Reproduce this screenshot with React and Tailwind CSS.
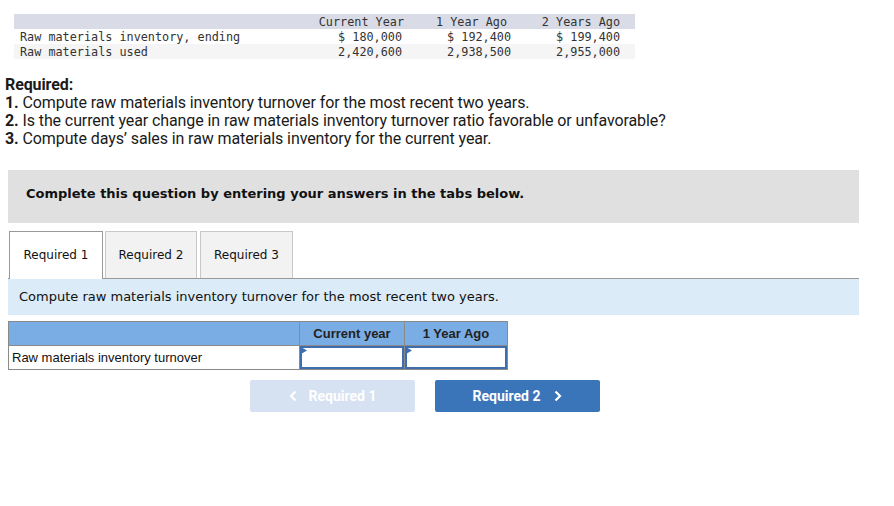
export default function App() {
  const mono = { fontFamily: '"DejaVu Sans Mono", "Liberation Mono", monospace' }
  const verdana = { fontFamily: '"DejaVu Sans", Verdana, sans-serif' }
  const arial = { fontFamily: '"Liberation Sans", Arial, sans-serif' }

  return (
    <div className="w-[894px] h-[506px] bg-white text-[#222] relative">
      {/* data table */}
      <div className="pt-[14px] pl-[14px]">
        <table className="w-[621px] text-[11.8px] leading-[14px] text-[#333] border-collapse" style={mono}>
          <thead>
            <tr className="bg-[#d9dce6] h-[15px]">
              <th className="w-[290px]" />
              <th className="font-normal text-right pr-[2px] w-[102px] pt-px">Current Year</th>
              <th className="font-normal text-right pr-[6px] w-[107px] pt-px">1 Year Ago</th>
              <th className="font-normal text-right pr-[15px] pt-px">2 Years Ago</th>
            </tr>
          </thead>
          <tbody>
            <tr className="h-[15px]">
              <td className="pl-[6px] text-left pt-px">Raw materials inventory, ending</td>
              <td className="text-right pr-[4px] pt-px">$ 180,000</td>
              <td className="text-right pr-[2px] pt-px">$ 192,400</td>
              <td className="text-right pr-[15px] pt-px">$ 199,400</td>
            </tr>
            <tr className="h-[15px] bg-[#f5f5f5]">
              <td className="pl-[6px] text-left pt-px">Raw materials used</td>
              <td className="text-right pr-[4px] pt-px">2,420,600</td>
              <td className="text-right pr-[2px] pt-px">2,938,500</td>
              <td className="text-right pr-[15px] pt-px">2,955,000</td>
            </tr>
          </tbody>
        </table>
      </div>

      {/* required list */}
      <div className="mt-[17px] pl-[5px] text-[16px] leading-[18px] text-[#1a1a1a]" style={{ fontFamily: 'Roboto, "Liberation Sans", sans-serif', letterSpacing: '-0.1px' }}>
        <p className="font-bold">Required:</p>
        <p><span className="font-bold">1.</span> Compute raw materials inventory turnover for the most recent two years.</p>
        <p><span className="font-bold">2.</span> Is the current year change in raw materials inventory turnover ratio favorable or unfavorable?</p>
        <p><span className="font-bold">3.</span> Compute days’ sales in raw materials inventory for the current year.</p>
      </div>

      {/* instructions box */}
      <div className="ml-[8px] mt-[22px] w-[851px] h-[53px] bg-[#e0e0e0] pl-[18px] pt-[14px]">
        <p className="text-[13px] leading-[20px] font-bold text-[#111]" style={verdana}>
          Complete this question by entering your answers in the tabs below.
        </p>
      </div>

      {/* tabs */}
      <div className="ml-[8px] mt-[8px] w-[851px] flex items-end border-b border-[#999] h-[48px]">
        <div className="ml-[1px] w-[94px] h-[48px] bg-white border border-[#999] border-b-0 flex items-center justify-center text-[12px] text-[#111] -mb-px relative z-10 pb-px" style={verdana}>
          Required 1
        </div>
        <div className="ml-[2px] w-[92px] h-[47px] bg-[#f2f2f2] border border-[#c8c8c8] border-b-0 flex items-center justify-center text-[12px] text-[#111]" style={verdana}>
          Required 2
        </div>
        <div className="ml-[3px] w-[93px] h-[47px] bg-[#f2f2f2] border border-[#c8c8c8] border-b-0 flex items-center justify-center text-[12px] text-[#111]" style={verdana}>
          Required 3
        </div>
      </div>

      {/* tab content */}
      <div className="ml-[8px] w-[851px] h-[36px] bg-[#dbebf8] flex items-center pl-[11px]">
        <p className="text-[13px] text-[#111]" style={verdana}>
          Compute raw materials inventory turnover for the most recent two years.
        </p>
      </div>

      <div className="ml-[8px] mt-[6px]" style={arial}>
        <div className="flex w-[500px] border border-[#8a8a8a] bg-[#7aade4] h-[25px]">
          <div className="w-[290px]" />
          <div className="w-[105px] border-l border-[#8a8a8a] flex items-center justify-center font-bold text-[13px] text-[#222]">Current year</div>
          <div className="flex-1 border-l border-[#8a8a8a] flex items-center justify-center font-bold text-[13px] text-[#222]">1 Year Ago</div>
        </div>
        <div className="flex w-[500px] border border-t-0 border-[#8a8a8a] h-[24px]">
          <div className="w-[290px] flex items-center pl-[3px] text-[13px] text-[#111]">Raw materials inventory turnover</div>
          <div className="w-[105px] border-l border-[#8a8a8a] p-0 relative">
            <div className="absolute inset-0 border-2 border-[#3e6eb0] bg-white" />
            <svg className="absolute left-[1px] top-[1px]" width="6" height="7" viewBox="0 0 6 7"><path d="M0 0 L6 3.5 L0 7 Z" fill="#3e6eb0" /></svg>
          </div>
          <div className="flex-1 border-l border-[#8a8a8a] relative">
            <div className="absolute inset-0 border-2 border-[#3e6eb0] bg-white" />
            <svg className="absolute left-[1px] top-[1px]" width="6" height="7" viewBox="0 0 6 7"><path d="M0 0 L6 3.5 L0 7 Z" fill="#3e6eb0" /></svg>
          </div>
        </div>
      </div>

      {/* nav buttons */}
      <div className="flex gap-[20px] ml-[250px] mt-[10px]" style={{ fontFamily: 'Roboto, "Liberation Sans", sans-serif' }}>
        <button className="w-[165px] h-[32px] rounded-[2px] bg-[#d6e2f1] text-white font-bold text-[14px] flex items-center justify-center gap-[12px]">
          <svg width="8" height="12" viewBox="0 0 8 12"><path d="M6.5 1.5 L2 6 L6.5 10.5" stroke="white" strokeWidth="2.2" fill="none" /></svg>
          Required 1
        </button>
        <button className="w-[165px] h-[32px] rounded-[2px] bg-[#3a75ba] text-white font-bold text-[14px] flex items-center justify-center gap-[14px]">
          Required 2
          <svg width="8" height="12" viewBox="0 0 8 12"><path d="M1.5 1.5 L6 6 L1.5 10.5" stroke="white" strokeWidth="2.2" fill="none" /></svg>
        </button>
      </div>
    </div>
  )
}
